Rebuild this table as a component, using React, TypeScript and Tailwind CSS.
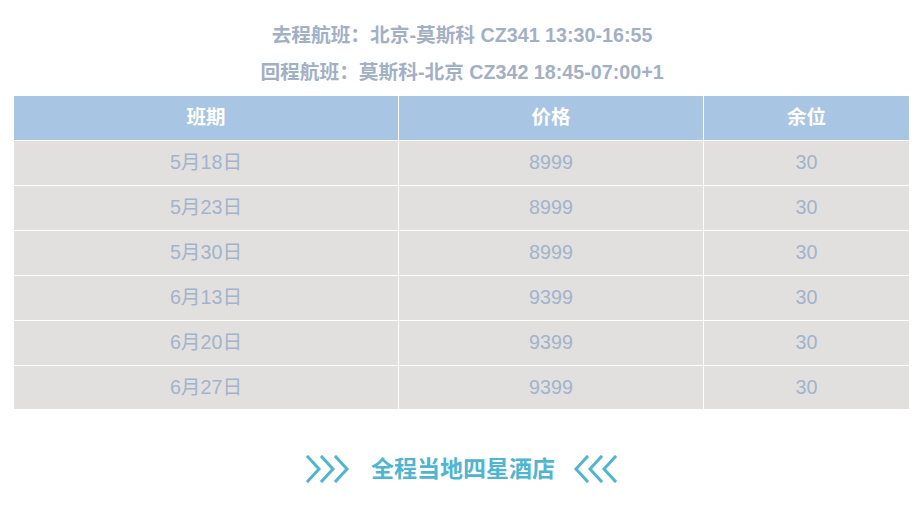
import React from "react";

const rows = [
  ["5月18日", "8999", "30"],
  ["5月23日", "8999", "30"],
  ["5月30日", "8999", "30"],
  ["6月13日", "9399", "30"],
  ["6月20日", "9399", "30"],
  ["6月27日", "9399", "30"],
];

function Chevrons({ dir }: { dir: "right" | "left" }) {
  const xs = [2, 16, 30];
  return (
    <svg width="44" height="28" viewBox="0 0 44 28" fill="none" stroke="#4fb5d0" strokeWidth="3" strokeLinecap="square">
      {xs.map((x) =>
        dir === "right" ? (
          <polyline key={x} points={`${x},2 ${x + 11},14 ${x},26`} />
        ) : (
          <polyline key={x} points={`${x + 11},2 ${x},14 ${x + 11},26`} />
        )
      )}
    </svg>
  );
}

export default function App() {
  return (
    <div
      className="w-[924px] h-[505px] bg-white"
      style={{ fontFamily: '"Liberation Sans", "Noto Sans CJK SC", sans-serif' }}
    >
      <div className="pt-[17px] text-center font-bold text-[19.7px] leading-[37px] text-[#a2b0c6]">
        <div>去程航班：北京-莫斯科 CZ341 13:30-16:55</div>
        <div>回程航班：莫斯科-北京 CZ342 18:45-07:00+1</div>
      </div>
      <div className="mt-[5px] pl-[14px]">
        <div className="grid grid-cols-[384px_304px_205px] gap-px bg-white w-[895px]">
          {["班期", "价格", "余位"].map((h) => (
            <div key={h} className="h-[44px] flex items-center justify-center bg-[#a8c5e3] text-white font-bold text-[19.5px]">
              {h}
            </div>
          ))}
          {rows.map((r, i) =>
            r.map((c, j) => (
              <div
                key={`${i}-${j}`}
                className={`${i === rows.length - 1 ? "h-[43px]" : "h-[44px]"} flex items-center justify-center bg-[#e1e0de] text-[#a3b3cb] text-[19.7px]`}
              >
                {c}
              </div>
            ))
          )}
        </div>
      </div>
      <div className="mt-[46px] flex items-center justify-center">
        <Chevrons dir="right" />
        <div className="ml-[21px] mr-[19px] text-[23px] font-bold text-[#4fb5d0] leading-[28px]">全程当地四星酒店</div>
        <Chevrons dir="left" />
      </div>
    </div>
  );
}
